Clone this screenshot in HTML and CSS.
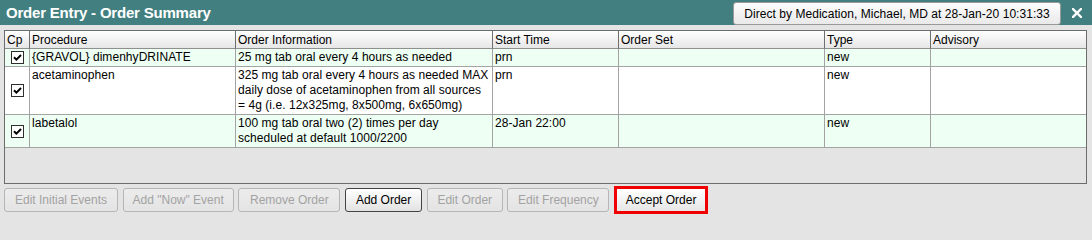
FILE: index.html
```html
<!DOCTYPE html>
<html>
<head>
<meta charset="utf-8">
<title>Order Entry - Order Summary</title>
<link rel="stylesheet" href="styles.css">
</head>
<body>
<div class="title-bar">
  <span class="title">Order Entry - Order Summary</span>
  <button class="title-btn">Direct by Medication, Michael, MD at 28-Jan-20 10:31:33</button>
  <span class="close"><svg width="10" height="10" viewBox="0 0 10 10"><path d="M1 1L9 9M9 1L1 9" stroke="#fff" stroke-width="2.4" stroke-linecap="square"/></svg></span>
</div>

<div class="grid">
  <div class="row head">
    <div class="c">Cp</div>
    <div class="c">Procedure</div>
    <div class="c">Order Information</div>
    <div class="c">Start Time</div>
    <div class="c">Order Set</div>
    <div class="c">Type</div>
    <div class="c">Advisory</div>
  </div>
  <div class="row green">
    <div class="c cp"><span class="chk"><svg width="9" height="9" viewBox="0 0 9 9"><path d="M1 4.2L3.4 6.6L8 2" fill="none" stroke="#000" stroke-width="2"/></svg></span></div>
    <div class="c">{GRAVOL} dimenhyDRINATE</div>
    <div class="c">25 mg tab oral every 4 hours as needed</div>
    <div class="c">prn</div>
    <div class="c"></div>
    <div class="c">new</div>
    <div class="c"></div>
  </div>
  <div class="row white tall">
    <div class="c cp"><span class="chk"><svg width="9" height="9" viewBox="0 0 9 9"><path d="M1 4.2L3.4 6.6L8 2" fill="none" stroke="#000" stroke-width="2"/></svg></span></div>
    <div class="c">acetaminophen</div>
    <div class="c">325 mg tab oral every 4 hours as needed MAX<br>daily dose of acetaminophen from all sources<br>= 4g (i.e. 12x325mg, 8x500mg, 6x650mg)</div>
    <div class="c">prn</div>
    <div class="c"></div>
    <div class="c">new</div>
    <div class="c"></div>
  </div>
  <div class="row green">
    <div class="c cp"><span class="chk"><svg width="9" height="9" viewBox="0 0 9 9"><path d="M1 4.2L3.4 6.6L8 2" fill="none" stroke="#000" stroke-width="2"/></svg></span></div>
    <div class="c">labetalol</div>
    <div class="c">100 mg tab oral two (2) times per day<br>scheduled at default 1000/2200</div>
    <div class="c">28-Jan 22:00</div>
    <div class="c"></div>
    <div class="c">new</div>
    <div class="c"></div>
  </div>
</div>

<div class="actions">
  <button class="btn w114" disabled>Edit Initial Events</button>
  <button class="btn w111" disabled>Add "Now" Event</button>
  <button class="btn w102" disabled>Remove Order</button>
  <button class="btn w77">Add Order</button>
  <button class="btn w76" disabled>Edit Order</button>
  <button class="btn w102" disabled>Edit Frequency</button>
  <button class="btn accept">Accept Order</button>
</div>
</body>
</html>
```

FILE: styles.css
```css
* { box-sizing: border-box; }

html, body {
  margin: 0;
  padding: 0;
  background: #e4e4e4;
  font-family: "Liberation Sans", Arial, sans-serif;
  font-size: 12px;
  color: #000;
  width: 1092px;
  height: 216px;
  overflow: hidden;
}

.title-bar {
  height: 25px;
  background: #427f80;
  display: flex;
  align-items: flex-start;
  padding: 0 10px 0 6px;
}

.title {
  color: #fff;
  font-weight: bold;
  font-size: 15px;
  letter-spacing: -0.2px;
  line-height: 25px;
}

.title-btn {
  margin-left: auto;
  margin-top: 2px;
  width: 328px;
  height: 23px;
  padding: 0;
  font-family: "Liberation Sans", Arial, sans-serif;
  font-size: 12px;
  letter-spacing: 0.05px;
  color: #000;
  background: linear-gradient(#fdfdfd, #e9e9e9);
  border: 1px solid #9a9a9a;
  border-radius: 3px;
}

.close {
  margin-left: 11px;
  margin-top: 8px;
  width: 10px;
  height: 10px;
  display: flex;
}

.grid {
  margin: 5px 5px 0 4px;
  width: 1083px;
  height: 154px;
  border: 1px solid #6c6c6c;
  background: #e4e4e4;
}

.row {
  display: grid;
  grid-template-columns: 25px 206px 257px 126px 206px 106px 155px;
}

.c {
  border-right: 1px solid #a3a3a3;
  border-bottom: 1px solid #a3a3a3;
  padding: 1px 2px 1px 2px;
  line-height: 15px;
  letter-spacing: 0.05px;
  overflow: hidden;
  white-space: nowrap;
}
.c:last-child { border-right: none; }

.head .c {
  height: 18px;
  padding: 2px 2px 0 2px;
  line-height: 15px;
  letter-spacing: 0;
  background: linear-gradient(#ffffff, #e6e6e6);
  border-right: 1px solid #6f6f6f;
  border-bottom: 1px solid #8f8f8f;
}
.head .c:last-child { border-right: none; }

.green .c { background: #eefff3; }
.white .c { background: #ffffff; }

.tall .c { height: 48px; }

.c.cp {
  display: flex;
  align-items: center;
  justify-content: center;
  padding: 0 0 0 1px;
}

.chk {
  width: 13px;
  height: 13px;
  border: 1px solid #2e2e2e;
  background: #fff;
  display: flex;
  align-items: center;
  justify-content: center;
}

.actions {
  display: flex;
  align-items: center;
  gap: 4.7px;
  margin: 2px 0 0 4px;
  height: 28px;
}

.btn {
  height: 24px;
  padding: 0;
  font-family: "Liberation Sans", Arial, sans-serif;
  font-size: 12px;
  color: #000;
  background: linear-gradient(#ffffff, #e2e2e2);
  border: 1px solid #444;
  border-radius: 3px;
  text-align: center;
}

.btn:disabled {
  color: #a3a3a3;
  background: linear-gradient(#ececec, #e4e4e4);
  border-color: #b6b6b6;
}

.w114 { width: 114px; }
.w111 { width: 111px; }
.w102 { width: 102px; }
.w77 { width: 77px; }
.w76 { width: 76px; }

.btn.accept {
  width: 94px;
  height: 28px;
  border: 3px solid #f00000;
  border-radius: 0;
  background: linear-gradient(#ffffff, #e6e6e6);
}
```
